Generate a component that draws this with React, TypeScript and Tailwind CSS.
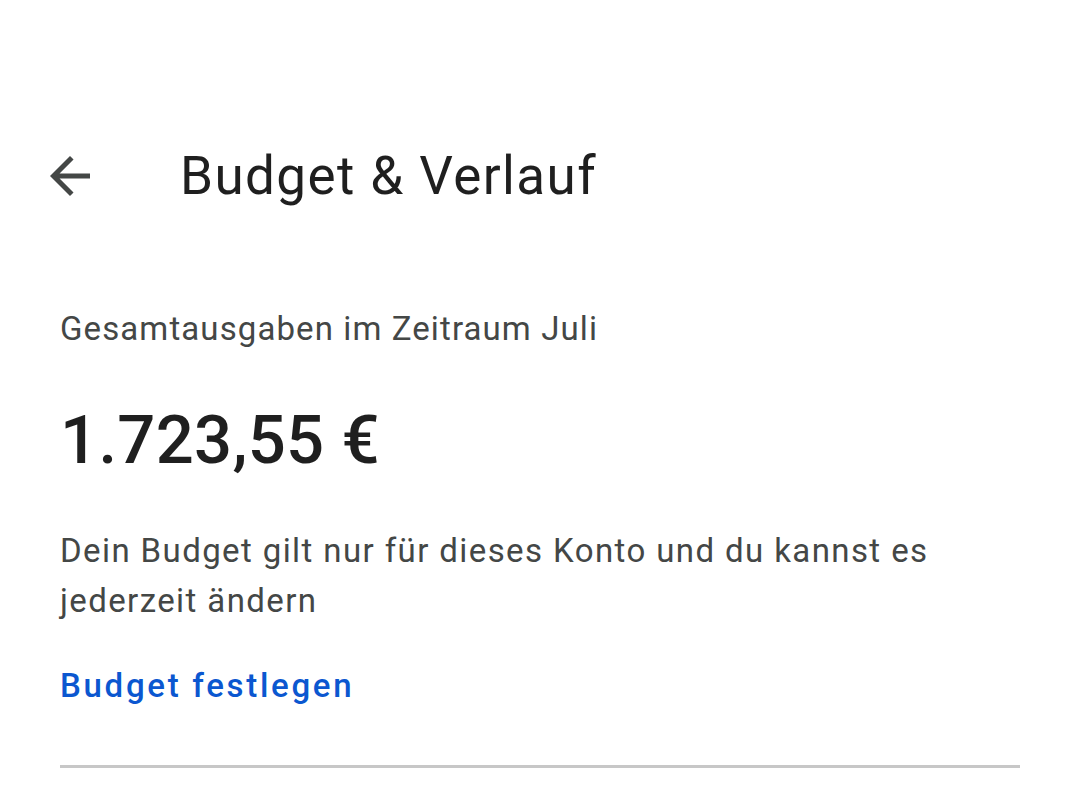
export default function App() {
  return (
    <div
      className="h-[786px] w-[1080px] overflow-hidden bg-white"
      style={{ fontFamily: "Roboto, 'Noto Sans', sans-serif" }}
    >
      {/* header */}
      <div className="mt-[128px] flex h-[96px] flex-row items-center">
        <button className="ml-[40px] flex h-[60px] w-[60px] items-center justify-center text-[#444746]">
          <svg viewBox="0 0 24 24" className="h-[60px] w-[60px]" fill="currentColor">
            <path d="M20 11H7.83l5.59-5.59L12 4l-8 8 8 8 1.41-1.41L7.83 13H20v-2z" />
          </svg>
        </button>
        <h1 className="ml-[80px] text-[53px] leading-[96px] font-normal tracking-[1.4px] text-[#1f1f1f]">
          Budget &amp; Verlauf
        </h1>
      </div>

      <div className="flex flex-col px-[60px]">
        <p className="mt-[85px] text-[33px] leading-[40px] tracking-[1.1px] text-[#444746]">
          Gesamtausgaben im Zeitraum Juli
        </p>
        <p className="mt-[51px] text-[67px] leading-[80px] font-medium tracking-[0.3px] text-[#1f1f1f]">
          1.723,55 €
        </p>
        <p className="mt-[46px] text-[33px] leading-[50px] tracking-[1.4px] text-[#444746]">
          Dein Budget gilt nur für dieses Konto und du kannst es jederzeit ändern
        </p>
        <a className="mt-[40px] text-[33px] leading-[40px] font-medium tracking-[2.7px] text-[#0b57d0]">
          Budget festlegen
        </a>
        <div className="mt-[59px] h-[3px] w-full bg-[#c7c7c7]" />
      </div>
    </div>
  );
}
